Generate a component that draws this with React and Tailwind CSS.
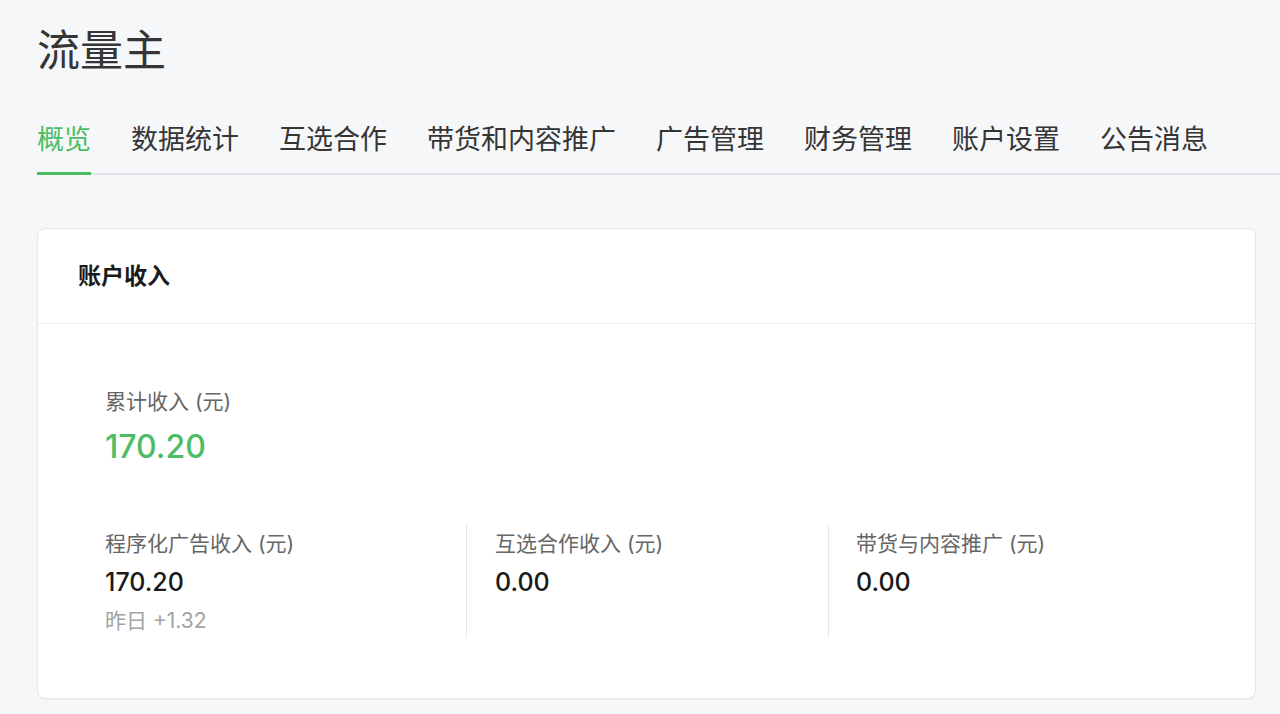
import React from 'react'

const tabs = ['概览', '数据统计', '互选合作', '带货和内容推广', '广告管理', '财务管理', '账户设置', '公告消息']

const font = { fontFamily: 'Inter, "Noto Sans CJK SC", sans-serif' }

const App = () => {
  return (
    <div className="min-h-screen bg-[#f6f7f9] pl-[37px] pt-[29px] text-[#333]" style={font}>
      {/* Title */}
      <h1 className="text-[43px] leading-[43px] font-normal text-[#353535]">流量主</h1>

      {/* Tabs */}
      <nav className="mt-[54px] flex gap-10 border-b-2 border-[#e3e5e8]">
        {tabs.map((t, i) => (
          <a
            key={t}
            href="#"
            className={`-mb-[2px] border-b-[3px] pb-[19px] text-[27px] leading-[27px] ${
              i === 0 ? 'border-[#4cbd64] text-[#4cbd64]' : 'border-transparent text-[#353535]'
            }`}
          >
            {t}
          </a>
        ))}
      </nav>

      {/* Account income card */}
      <div className="mr-[24px] mt-[53px] rounded-lg border border-[#e6e7ea] bg-white shadow-[0_1px_2px_rgba(0,0,0,0.04)]">
        <div className="flex h-[95px] items-center border-b border-[#ebecee] px-10">
          <h2 className="text-[23px] font-semibold text-[#1a1a1a]">账户收入</h2>
        </div>

        <div className="pb-[60px] pl-[67px] pt-[67px]">
          <p className="text-[21px] leading-[21px] text-[#666]">累计收入 (元)</p>
          <p className="mt-[19px] text-[32px] leading-[32px] font-medium text-[#4cbd64]">170.20</p>

          <div className="mt-[61px] flex">
            <div className="w-[361px] pb-[7px] pt-[9px]">
              <p className="text-[21px] leading-[21px] text-[#666]">程序化广告收入 (元)</p>
              <p className="mt-[16px] text-[25px] leading-[25px] font-medium text-[#1a1a1a]">170.20</p>
              <p className="mt-[15px] text-[21px] leading-[21px] text-[#a3a3a3]">昨日 +1.32</p>
            </div>
            <div className="w-[362px] border-l border-[#e6e7ea] pb-[7px] pl-[28px] pt-[9px]">
              <p className="text-[21px] leading-[21px] text-[#666]">互选合作收入 (元)</p>
              <p className="mt-[16px] text-[25px] leading-[25px] font-medium text-[#1a1a1a]">0.00</p>
            </div>
            <div className="flex-1 border-l border-[#e6e7ea] pb-[7px] pl-[27px] pt-[9px]">
              <p className="text-[21px] leading-[21px] text-[#666]">带货与内容推广 (元)</p>
              <p className="mt-[16px] text-[25px] leading-[25px] font-medium text-[#1a1a1a]">0.00</p>
            </div>
          </div>
        </div>
      </div>
    </div>
  )
}

export default App
